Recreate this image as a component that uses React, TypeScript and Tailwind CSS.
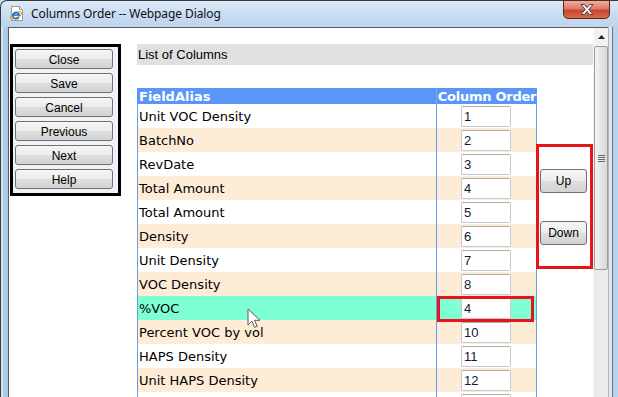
import React from "react";

const rows: [string, string][] = [
  ["Unit VOC Density", "1"],
  ["BatchNo", "2"],
  ["RevDate", "3"],
  ["Total Amount", "4"],
  ["Total Amount", "5"],
  ["Density", "6"],
  ["Unit Density", "7"],
  ["VOC Density", "8"],
  ["%VOC", "4"],
  ["Percent VOC by vol", "10"],
  ["HAPS Density", "11"],
  ["Unit HAPS Density", "12"],
  ["", ""],
];

const btn =
  "border border-[#707070] rounded-[3px] bg-[linear-gradient(to_bottom,#f6f6f6_0%,#ececec_48%,#dedede_52%,#d2d2d2_100%)] flex items-center justify-center text-[12px] text-black leading-none";

function IEIcon() {
  return (
    <svg width="14" height="15" viewBox="0 0 14 15">
      <path d="M1.5 0.5h8l3 3v11h-11z" fill="#fff" stroke="#9a9a9a" />
      <path d="M9.5 0.5v3h3" fill="#e8e8e8" stroke="#9a9a9a" />
      <ellipse cx="6" cy="9.3" rx="6" ry="2.4" transform="rotate(-28 6 9.3)" fill="none" stroke="#f0a81c" strokeWidth="1.2" />
      <path d="M8.8 11.2A3.2 3.2 0 1 1 9.2 9H3" fill="none" stroke="#1a6ad0" strokeWidth="1.7" />
    </svg>
  );
}

export default function App() {
  return (
    <div className="w-[618px] h-[397px] overflow-hidden relative bg-[#c4d9f0] font-['Liberation_Sans',Arial,sans-serif]">
      {/* Title bar */}
      <div className="h-[27px] relative flex items-center rounded-tl-[7px] border-t border-l border-[#3a3a3a] bg-[linear-gradient(to_bottom,#dce9f7,#c6dbf1_60%,#bfd5ee)]">
        <div className="ml-[9px] mt-[-1px] flex">
          <IEIcon />
        </div>
        <div className="ml-[7px] mt-[-1px] text-[12px] text-[#111] font-['Noto_Sans','Open_Sans',sans-serif] tracking-[-0.1px]">
          Columns Order -- Webpage Dialog
        </div>
        <div className="absolute left-[562px] top-[-1px] w-[47px] h-[19px] rounded-b-[5px] border border-[#5d2219] bg-[linear-gradient(to_bottom,#eab0a2_0%,#dd7a66_45%,#c8462f_55%,#d76b4f_100%)] flex items-center justify-center">
          <svg width="16" height="13" viewBox="0 0 16 13">
            <path
              d="M2 1.5h3.5L8 4.6l2.5-3.1H14l-4.2 5 4.2 5H10.5L8 8.4l-2.5 3.1H2l4.2-5z"
              fill="#f4f4f4"
              stroke="#4a4a4a"
              strokeWidth="1"
              strokeLinejoin="round"
            />
          </svg>
        </div>
      </div>

      {/* Body */}
      <div className="flex h-[370px]">
        {/* left frame */}
        <div className="w-[8px] flex">
          <div className="w-[1px] bg-[#3a3a3a]" />
          <div className="w-[2px] bg-[#d4e3f4]" />
          <div className="w-[5px] bg-[linear-gradient(to_right,#b3cce8,#a9c4e4)]" />
        </div>

        {/* content + scrollbar */}
        <div className="w-[600px] border-t border-l border-[#5c5c5c] flex">
          <div className="w-[584px] bg-white flex items-start overflow-hidden">
            {/* left button box */}
            <div className="ml-[1px] mt-[16px] w-[111px] border-[3px] border-black bg-[#eef3fa] pl-[2px] pr-[5px] pt-[2px] pb-[4px] flex flex-col gap-[4px]">
              {["Close", "Save", "Cancel", "Previous", "Next", "Help"].map((t) => (
                <div key={t} className={`${btn} h-[20px] pt-[1px]`}>
                  {t}
                </div>
              ))}
            </div>

            {/* main */}
            <div className="ml-[16px] mt-[16px] w-[456px] flex flex-col">
              <div className="h-[21px] bg-[#e0e0e0] flex items-center pl-[1px] text-[13px] text-black">
                List of Columns
              </div>
              <div className="mt-[23px] flex relative">
                {/* table */}
                <div className="w-[400px] flex flex-col font-['DejaVu_Sans',Verdana,sans-serif] text-[13px]">
                  <div className="h-[16px] bg-[#5a96f7] flex text-white font-bold leading-none">
                    <div className="w-[299px] pl-[2px] flex items-center">FieldAlias</div>
                    <div className="w-[101px] border-l border-[#7aa9f7] flex items-center justify-center whitespace-nowrap tracking-[-0.25px]">
                      Column Order
                    </div>
                  </div>
                  {rows.map(([name, ord], i) => {
                    const bg = i === 8 ? "bg-[#7fffd4]" : i % 2 === 1 ? "bg-[#fdedd6]" : "bg-white";
                    return (
                      <div key={i} className={`h-[24px] flex border-x border-[#6a9af0] ${bg}`}>
                        <div className="w-[298px] flex items-center pl-[1px] pt-[2px] text-black whitespace-nowrap">{name}</div>
                        <div className="w-[100px] border-l border-[#6a9af0] flex items-start">
                          <div className="ml-[24px] mt-[2px] w-[50px] h-[21px] bg-white border border-[#c9c9c9] border-t-[#adadad] rounded-[2px] flex items-center pl-[2px] pt-[1px] text-[13px] text-[#16163a] font-['Liberation_Sans',Arial,sans-serif]">
                            {ord}
                          </div>
                        </div>
                      </div>
                    );
                  })}
                </div>

                {/* up / down column */}
                <div className="w-[56px] pl-[3px] pt-[81px] flex flex-col gap-[28px]">
                  <div className={`${btn} w-[47px] h-[24px]`}>Up</div>
                  <div className={`${btn} w-[47px] h-[24px]`}>Down</div>
                </div>

                {/* annotations */}
                <div className="absolute left-[399px] top-[56px] w-[57px] h-[125px] border-[3px] border-[#e8141c]" />
                <div className="absolute left-[300px] top-[208px] w-[97px] h-[26px] border-[3px] border-[#e8141c]" />
                <svg className="absolute left-[110px] top-[220px]" width="14" height="22" viewBox="0 0 14 22">
                  <path
                    d="M1 1v16l4-3.8 2.6 6.2 2.6-1.1-2.6-6H13z"
                    fill="#ffffff"
                    stroke="#5a5a5a"
                    strokeWidth="1"
                    strokeLinejoin="round"
                  />
                </svg>
              </div>
            </div>
          </div>

          {/* scrollbar */}
          <div className="w-[15px] bg-[#ebebeb] flex flex-col border-l border-[#f6f6f6]">
            <div className="h-[18px] bg-[#f2f2f2] flex items-center justify-center">
              <svg width="7" height="4" viewBox="0 0 7 4">
                <path d="M0 4L3.5 0 7 4z" fill="#222" />
              </svg>
            </div>
            <div className="h-[224px] w-[14px] rounded-[2px] border border-[#9b9b9b] bg-[linear-gradient(to_right,#f4f4f4,#e6e6e6_50%,#d8d8d8)] flex items-center justify-center">
              <div className="flex flex-col gap-[1px]">
                <div className="w-[7px] h-[1px] bg-[#6b6b6b]" />
                <div className="w-[7px] h-[1px] bg-[#6b6b6b]" />
                <div className="w-[7px] h-[1px] bg-[#6b6b6b]" />
                <div className="w-[7px] h-[1px] bg-[#6b6b6b]" />
              </div>
            </div>
          </div>
        </div>

        {/* right frame */}
        <div className="w-[10px] flex">
          <div className="w-[1px] bg-[#b5b5b5]" />
          <div className="w-[3px] bg-[#dde9f6]" />
          <div className="w-[1px] bg-[#6f6f6f]" />
          <div className="w-[5px] bg-[#b9d2ee]" />
        </div>
      </div>
    </div>
  );
}
